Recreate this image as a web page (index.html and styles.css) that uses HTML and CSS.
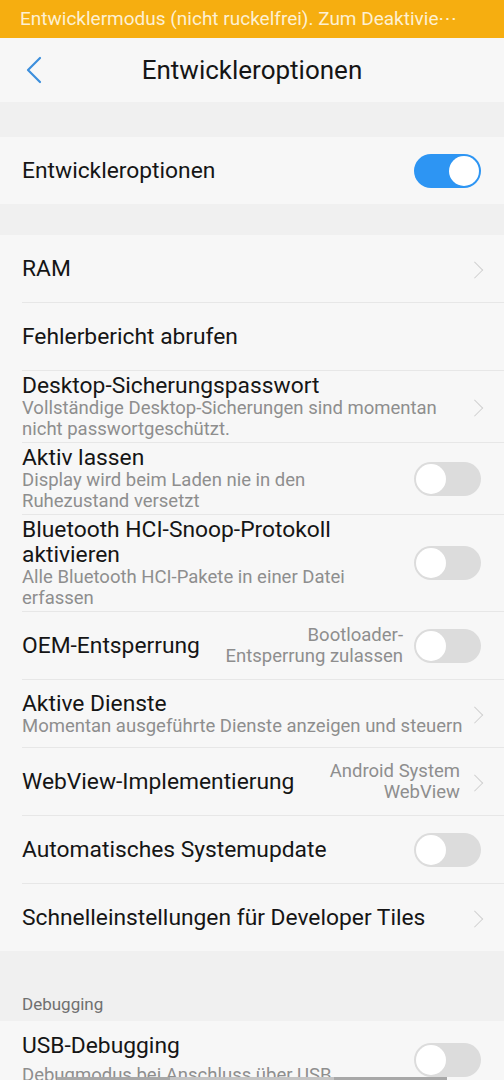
FILE: index.html
```html
<!DOCTYPE html>
<html lang="de">
<head>
<meta charset="utf-8">
<link rel="stylesheet" href="styles.css">
</head>
<body>
<div class="screen">
  <div class="banner">Entwicklermodus (nicht ruckelfrei). Zum Deaktivie⋯</div>
  <header class="topbar">
    <svg class="back" width="16" height="28" viewBox="0 0 16 28"><path d="M14 2 L2 14 L14 26" fill="none" stroke="#3d8fdc" stroke-width="2.2" stroke-linecap="round" stroke-linejoin="round"/></svg>
    <div class="title">Entwickleroptionen</div>
  </header>
  <div class="gap g35"></div>
  <section class="group">
    <div class="row"><div class="text"><div class="t">Entwickleroptionen</div></div><span class="switch on"></span></div>
  </section>
  <div class="gap g31"></div>
  <section class="group">
    <div class="row"><div class="text"><div class="t">RAM</div></div><span class="chev"></span></div>
    <div class="row"><div class="text"><div class="t">Fehlerbericht abrufen</div></div></div>
    <div class="row"><div class="text tight"><div class="t">Desktop-Sicherungspasswort</div><div class="s">Vollständige Desktop-Sicherungen sind momentan nicht passwortgeschützt.</div></div><span class="chev"></span></div>
    <div class="row"><div class="text"><div class="t">Aktiv lassen</div><div class="s">Display wird beim Laden nie in den Ruhezustand versetzt</div></div><span class="switch"></span></div>
    <div class="row"><div class="text"><div class="t">Bluetooth HCI-Snoop-Protokoll aktivieren</div><div class="s">Alle Bluetooth HCI-Pakete in einer Datei erfassen</div></div><span class="switch"></span></div>
    <div class="row"><div class="text"><div class="t">OEM-Entsperrung</div></div><div class="val">Bootloader-<br>Entsperrung zulassen</div><span class="switch"></span></div>
    <div class="row"><div class="text tight"><div class="t">Aktive Dienste</div><div class="s">Momentan ausgeführte Dienste anzeigen und steuern</div></div><span class="chev"></span></div>
    <div class="row"><div class="text"><div class="t">WebView-Implementierung</div></div><div class="val v2">Android System<br>WebView</div><span class="chev"></span></div>
    <div class="row"><div class="text"><div class="t">Automatisches Systemupdate</div></div><span class="switch"></span></div>
    <div class="row"><div class="text tight"><div class="t">Schnelleinstellungen für Developer Tiles</div></div><span class="chev"></span></div>
  </section>
  <div class="section-label">Debugging</div>
  <section class="group">
    <div class="row usb"><div class="text"><div class="t">USB-Debugging</div><div class="s">Debugmodus bei Anschluss über USB</div></div><span class="switch"></span></div>
  </section>
  <div class="navbar"><span class="seg a"></span><span class="seg b"></span><span class="seg a"></span></div>
</div>
</body>
</html>
```
FILE: styles.css
```css
* { box-sizing: border-box; }
html, body { margin: 0; padding: 0; }
body {
  width: 504px;
  height: 1080px;
  overflow: hidden;
  background: #f0f0f0;
  font-family: Roboto, "Noto Sans", "Liberation Sans", sans-serif;
}
.screen { position: relative; height: 1080px; overflow: hidden; }
.banner {
  height: 38px;
  background: #f6ae10;
  color: #fdf0d2;
  font-size: 19px;
  line-height: 38px;
  padding-left: 20px;
  white-space: nowrap;
  overflow: hidden;
}
.topbar {
  height: 64px;
  background: #f7f7f7;
  display: flex;
  align-items: center;
  justify-content: center;
  position: relative;
}
.back { position: absolute; left: 26px; top: 18px; }
.title { font-size: 26px; color: #151515; }
.gap { background: #f0f0f0; }
.g35 { height: 35px; }
.g31 { height: 31px; }
.group { background: #f7f7f7; }
.row {
  min-height: 68px;
  margin-left: 22px;
  padding: 2px 22px 2px 0;
  display: flex;
  align-items: center;
  border-top: 1px solid #e7e7e7;
}
.group .row:first-child { border-top: none; min-height: 67px; }
.text { flex: 1; min-width: 0; padding-right: 20px; }
.text.tight { padding-right: 4px; }
.t { font-size: 22.8px; line-height: 25px; color: #151515; }
.s { font-size: 18.5px; line-height: 21px; color: #8e8e8e; }
.row.usb { padding-top: 12px; }
.row.usb .s { margin-top: 7px; white-space: nowrap; }
.val {
  font-size: 18.5px;
  line-height: 21px;
  color: #8e8e8e;
  text-align: right;
  margin-right: 11px;
  white-space: nowrap;
}
.val.v2 { margin-right: 10px; }
.chev {
  width: 12px;
  height: 16px;
  flex: none;
  position: relative;
}
.chev::after {
  content: "";
  position: absolute;
  right: 2px;
  top: 3px;
  width: 10.5px;
  height: 10.5px;
  border-top: 1.5px solid #d0d0d0;
  border-right: 1.5px solid #d0d0d0;
  transform: rotate(45deg);
}
.switch {
  flex: none;
  width: 67px;
  height: 34px;
  border-radius: 17px;
  background: #dcdcdc;
  position: relative;
  margin-right: 1px;
}
.switch::after {
  content: "";
  position: absolute;
  left: 2px;
  top: 2px;
  width: 30px;
  height: 30px;
  border-radius: 50%;
  background: #fff;
}
.switch.on { background: #2d95f3; }
.switch.on::after { left: auto; right: 2px; }
.section-label {
  height: 70px;
  padding: 43px 0 0 22px;
  font-size: 17px;
  color: #6f6f6f;
  background: #f0f0f0;
}
.navbar {
  position: absolute;
  left: 57px;
  bottom: 0;
  width: 390px;
  height: 3px;
  display: flex;
}
.seg { height: 3px; }
.seg.a { width: 113px; background: #a8a8a8; }
.seg.b { width: 164px; background: #c4c4c4; }
```
